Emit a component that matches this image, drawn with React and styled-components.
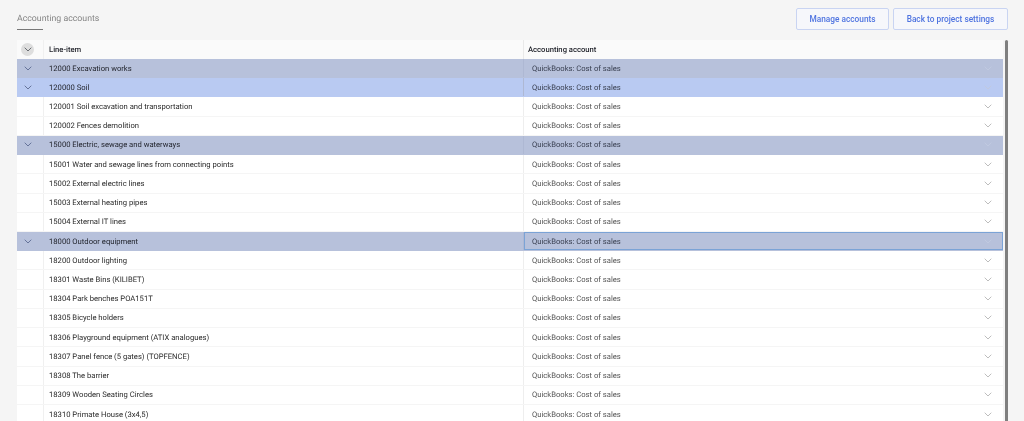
import React from "react";
import styled, { createGlobalStyle } from "styled-components";

const rows = [
  { label: "12000 Excavation works", kind: "group" },
  { label: "120000 Soil", kind: "sub" },
  { label: "120001 Soil excavation and transportation" },
  { label: "120002 Fences demolition" },
  { label: "15000 Electric, sewage and waterways", kind: "group" },
  { label: "15001 Water and sewage lines from connecting points" },
  { label: "15002 External electric lines" },
  { label: "15003 External heating pipes" },
  { label: "15004 External IT lines" },
  { label: "18000 Outdoor equipment", kind: "group", focused: true },
  { label: "18200 Outdoor lighting" },
  { label: "18301 Waste Bins (KILIBET)" },
  { label: "18304 Park benches POA151T" },
  { label: "18305 Bicycle holders" },
  { label: "18306 Playground equipment (ATIX analogues)" },
  { label: "18307 Panel fence (5 gates) (TOPFENCE)" },
  { label: "18308 The barrier" },
  { label: "18309 Wooden Seating Circles" },
  { label: "18310 Primate House (3x4,5)" },
];

const Chevron = ({ color }) => (
  <svg width="8" height="5" viewBox="0 0 8 5" fill="none">
    <path d="M.7.7L4 4 7.3.7" stroke={color} strokeWidth="1" />
  </svg>
);

export default function App() {
  return (
    <Page>
      <GlobalStyle />
      <TopBar>
        <Tab>Accounting accounts</Tab>
        <Actions>
          <OutlineButton>Manage accounts</OutlineButton>
          <OutlineButton $wide>Back to project settings</OutlineButton>
        </Actions>
      </TopBar>
      <TableWrap>
        <Table>
          <HeadRow>
            <ToggleCell>
              <RoundToggle>
                <Chevron color="#6a6d72" />
              </RoundToggle>
            </ToggleCell>
            <NameCell $head>Line-item</NameCell>
            <AccountHead>Accounting account</AccountHead>
          </HeadRow>
          {rows.map((row) => (
            <Row key={row.label} $kind={row.kind}>
              <ToggleCell $kind={row.kind}>
                {row.kind && <Chevron color="#66749a" />}
              </ToggleCell>
              <NameCell $kind={row.kind}>{row.label}</NameCell>
              <AccountCell $kind={row.kind} $focused={row.focused}>
                QuickBooks: Cost of sales
                <Chevron color={row.kind ? "#c0c9e0" : "#bdbdbd"} />
              </AccountCell>
            </Row>
          ))}
        </Table>
        <ScrollThumb />
      </TableWrap>
    </Page>
  );
}

// --- Styling section ---

const GlobalStyle = createGlobalStyle`
  html, body {
    margin: 0;
    height: 100%;
    overflow: hidden;
    background: #f5f5f5;
  }
  body {
    font-family: Roboto, "Liberation Sans", sans-serif;
    text-rendering: geometricPrecision;
  }
`;

const Page = styled.div`
  height: 421px;
  overflow: hidden;
  padding: 8px 16px 0 17px;
  box-sizing: border-box;
  will-change: opacity;
`;

const TopBar = styled.div`
  display: flex;
  justify-content: space-between;
  align-items: flex-start;
  height: 32px;
`;

const Tab = styled.div`
  height: 21px;
  line-height: 23px;
  font-size: 8.75px;
  color: #858585;
  width: 26px;
  white-space: nowrap;
  border-bottom: 1px solid #777;
`;

const Actions = styled.div`
  display: flex;
  gap: 4px;
`;

const OutlineButton = styled.button`
  width: ${(p) => (p.$wide ? "115px" : "93px")};
  height: 22px;
  padding: 0;
  border: 1px solid #c9d4f2;
  border-radius: 2px;
  background: #f6f7fb;
  color: #4f74e0;
  font-family: inherit;
  font-size: 8.3px;
  font-weight: 500;
`;

const TableWrap = styled.div`
  display: flex;
  gap: 2px;
`;

const Table = styled.div`
  flex: 1;
  min-width: 0;
`;

const rowColumns = `
  display: grid;
  grid-template-columns: 27px 479px 1fr;
  box-sizing: border-box;
`;

const HeadRow = styled.div`
  ${rowColumns}
  height: 19px;
  background: #fafafa;
`;

const Row = styled.div`
  ${rowColumns}
  height: 19.23px;
  background: ${(p) =>
    p.$kind === "group" ? "#b7c1db" : p.$kind === "sub" ? "#b9caf2" : "#fff"};
  border-bottom: 1px solid
    ${(p) => (p.$kind ? "transparent" : "#f5f5f5")};
`;

const ToggleCell = styled.div`
  display: flex;
  align-items: center;
  justify-content: center;
  padding-right: 5px;
  border-right: 1px solid ${(p) => (p.$kind ? "transparent" : "#f0f0f0")};
`;

const RoundToggle = styled.span`
  display: flex;
  align-items: center;
  justify-content: center;
  width: 13px;
  height: 13px;
  border-radius: 50%;
  background: #dedede;
`;

const NameCell = styled.div`
  display: flex;
  align-items: center;
  padding-left: 5px;
  font-size: 7.65px;
  font-weight: ${(p) => (p.$head ? 500 : 400)};
  color: ${(p) => (p.$head || p.$kind ? "#1e2028" : "#2a2a2a")};
  white-space: nowrap;
`;

const AccountHead = styled.div`
  display: flex;
  align-items: center;
  padding-left: 4px;
  font-size: 7.65px;
  font-weight: 500;
  color: #1e2028;
  border-left: 1px solid #e9e9e9;
`;

const AccountCell = styled.div`
  display: flex;
  align-items: center;
  justify-content: space-between;
  padding: 0 11px 0 8px;
  font-size: 7.65px;
  color: ${(p) => (p.$kind ? "#3a4052" : "#555")};
  border-left: 1px solid ${(p) => (p.$kind ? "#aeb8d3" : "#eeeeee")};
  box-shadow: ${(p) => (p.$focused ? "inset 0 0 0 1px #7ba3d6" : "none")};
`;

const ScrollThumb = styled.div`
  flex: 0 0 3px;
  height: 400px;
  border-radius: 2px 2px 0 0;
  background: #7f7f7f;
`;
